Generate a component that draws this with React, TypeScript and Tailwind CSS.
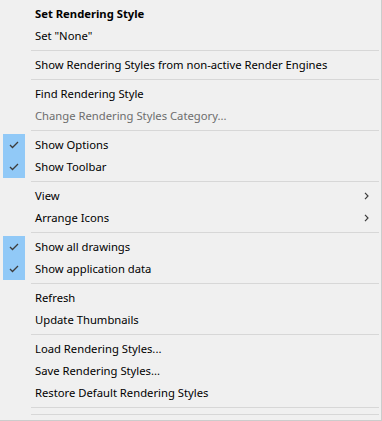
import React from "react";

type Item =
  | { type: "sep" }
  | { type: "item"; label: string; bold?: boolean; disabled?: boolean; checked?: boolean; sub?: boolean };

const items: Item[] = [
  { type: "item", label: "Set Rendering Style", bold: true },
  { type: "item", label: 'Set "None"' },
  { type: "sep" },
  { type: "item", label: "Show Rendering Styles from non-active Render Engines" },
  { type: "sep" },
  { type: "item", label: "Find Rendering Style" },
  { type: "item", label: "Change Rendering Styles Category...", disabled: true },
  { type: "sep" },
  { type: "item", label: "Show Options", checked: true },
  { type: "item", label: "Show Toolbar", checked: true },
  { type: "sep" },
  { type: "item", label: "View", sub: true },
  { type: "item", label: "Arrange Icons", sub: true },
  { type: "sep" },
  { type: "item", label: "Show all drawings", checked: true },
  { type: "item", label: "Show application data", checked: true },
  { type: "sep" },
  { type: "item", label: "Refresh" },
  { type: "item", label: "Update Thumbnails" },
  { type: "sep" },
  { type: "item", label: "Load Rendering Styles..." },
  { type: "item", label: "Save Rendering Styles..." },
  { type: "item", label: "Restore Default Rendering Styles" },
  { type: "sep" },
  { type: "sep" },
];

function Check() {
  return (
    <svg width="10" height="8" viewBox="0 0 10 8" fill="none">
      <path d="M1 4 L3.5 6.5 L9 1" stroke="#3c3c3c" strokeWidth="1.3" />
    </svg>
  );
}

function Chevron() {
  return (
    <svg width="5" height="8" viewBox="0 0 5 8" fill="none">
      <path d="M1 0.8 L4 4 L1 7.2" stroke="#3c3c3c" strokeWidth="1.2" />
    </svg>
  );
}

export default function App() {
  return (
    <div
      className="w-[382px] h-[421px] bg-[#f0f0f0] border-r border-b border-[#cccccc] pt-[3px] pb-[2px] text-[11.25px] text-black"
      style={{ fontFamily: '"Noto Sans", "Open Sans", sans-serif' }}
    >
      {items.map((it, i) =>
        it.type === "sep" ? (
          <div key={i} className="h-[7px] flex items-center">
            <div className="ml-[31px] mr-[2px] flex-1 h-px bg-[#d7d7d7]" />
          </div>
        ) : (
          <div key={i} className="h-[22px] flex items-center">
            <div
              className={
                "ml-[3px] w-[22px] h-[22px] flex items-center justify-center " +
                (it.checked ? "bg-[#91c9f7]" : "")
              }
            >
              {it.checked ? <Check /> : null}
            </div>
            <div
              className={
                "ml-[10px] flex-1 leading-[22px] whitespace-nowrap " +
                (it.bold ? "font-bold " : "") +
                (it.disabled ? "text-[#6d6d6d]" : "")
              }
            >
              {it.label}
            </div>
            {it.sub ? (
              <div className="w-[5px] mr-[12px] flex items-center">
                <Chevron />
              </div>
            ) : null}
          </div>
        )
      )}
    </div>
  );
}
